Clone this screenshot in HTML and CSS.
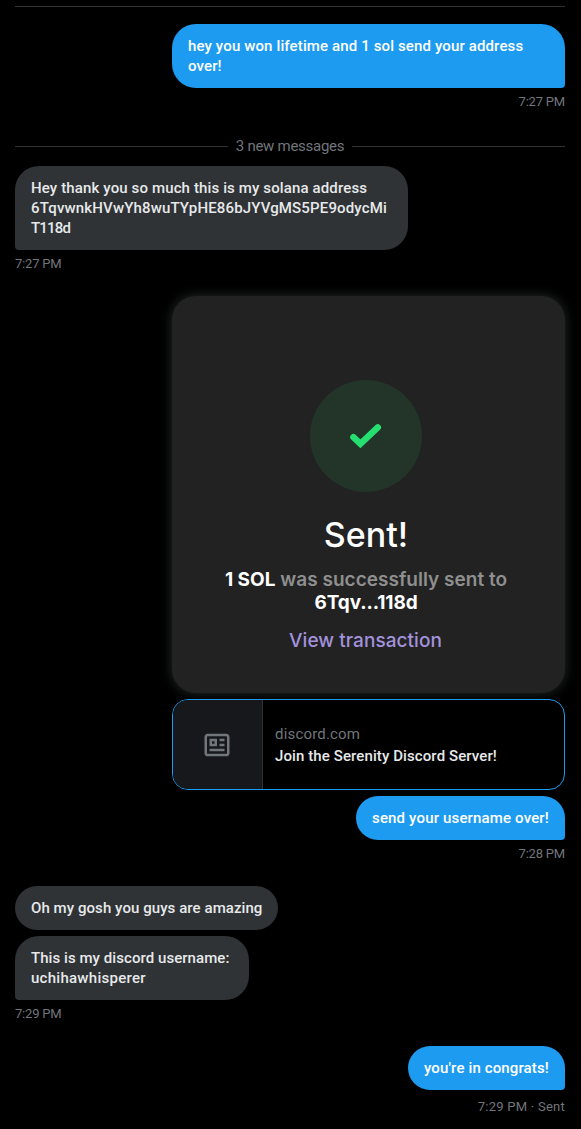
FILE: index.html
```html
<!DOCTYPE html>
<html lang="en">
<head>
    <meta charset="UTF-8">
    <meta name="viewport" content="width=device-width, initial-scale=1.0">
    <title>Messages</title>
    <link rel="stylesheet" href="styles.css">
</head>
<body>
    <div class="chat">
        <hr class="line">

        <div class="group sent">
            <div class="bubble last hey">hey you won lifetime and 1 sol send your address<br>over!</div>
            <div class="time">7:27 PM</div>
        </div>

        <div class="divider"><span>3 new messages</span></div>

        <div class="group received">
            <div class="bubble last address">Hey thank you so much this is my solana address<br><span class="wallet">6TqvwnkHVwYh8wuTYpHE86bJYVgMS5PE9odycMi</span><br><span class="wallet-end">T118d</span></div>
            <div class="time">7:27 PM</div>
        </div>

        <div class="group sent">
            <div class="receipt">
                <div class="circle">
                    <svg width="34" height="26" viewBox="0 0 34 26">
                        <path d="M4.4 14.2 L11.4 20.8 L28.8 4.4" fill="none" stroke="#25df70" stroke-width="6.4" stroke-linecap="round"/>
                    </svg>
                </div>
                <h1>Sent!</h1>
                <p><b>1 SOL</b> was successfully sent to<br><b class="short">6Tqv...118d</b></p>
                <a>View transaction</a>
            </div>
            <div class="card">
                <div class="card-icon">
                    <svg width="30" height="30" viewBox="0 0 24 24" fill="#71767b">
                        <path d="M1.998 5.5c0-1.38 1.119-2.5 2.5-2.5h15c1.381 0 2.5 1.12 2.5 2.5v13c0 1.38-1.119 2.5-2.5 2.5h-15c-1.381 0-2.5-1.12-2.5-2.5v-13zm2.5-.5c-.276 0-.5.22-.5.5v13c0 .28.224.5.5.5h15c.276 0 .5-.22.5-.5v-13c0-.28-.224-.5-.5-.5h-15zM6 7h6v6H6V7zm2 2v2h2V9H8zm10 0h-4V7h4v2zm0 4h-4v-2h4v2zm-.002 4h-12v-2h12v2z"/>
                    </svg>
                </div>
                <div class="card-text">
                    <span class="domain">discord.com</span>
                    <span class="title">Join the Serenity Discord Server!</span>
                </div>
            </div>
            <div class="bubble last username">send your username over!</div>
            <div class="time">7:28 PM</div>
        </div>

        <div class="group received">
            <div class="bubble gosh">Oh my gosh you guys are amazing</div>
            <div class="bubble last discord">This is my discord username:<br><span class="handle">uchihawhisperer</span></div>
            <div class="time">7:29 PM</div>
        </div>

        <div class="group sent">
            <div class="bubble last congrats">you're in congrats!</div>
            <div class="time status">7:29 PM · Sent</div>
        </div>
    </div>
</body>
</html>
```
FILE: styles.css
```css
* {
    box-sizing: border-box;
}
body {
    margin: 0;
    background-color: #000;
    color: #e7e9ea;
    font-family: Roboto, Arial, sans-serif;
    font-size: 15px;
    line-height: 20px;
}
.chat {
    height: 1129px;
    padding: 6px 16px 0 15px;
    overflow: hidden;
}
.line {
    height: 1px;
    margin: 0 0 17px;
    border: none;
    background-color: #2f3336;
}
.group {
    display: flex;
    flex-direction: column;
    align-items: flex-start;
    gap: 6px;
    margin-bottom: 24px;
}
.sent {
    align-items: flex-end;
}
.bubble {
    max-width: 393px;
    padding: 12px 16px;
    border-radius: 22px;
    background-color: #2f3336;
    font-weight: 500;
    letter-spacing: 0.13px;
    white-space: nowrap;
}
.sent .bubble {
    background-color: #1d9bf0;
    color: #fff;
}
.hey, .address {
    width: 393px;
    border-radius: 24px;
}
.username {
    width: 209px;
    letter-spacing: 0.16px;
}
.gosh {
    width: 263px;
    letter-spacing: 0.07px;
}
.discord {
    width: 234px;
    border-radius: 24px;
    letter-spacing: 0.06px;
}
.congrats {
    width: 157px;
}
.sent .last {
    border-bottom-right-radius: 4px;
}
.received .last {
    border-bottom-left-radius: 4px;
}
.wallet {
    letter-spacing: 0.15px;
}
.wallet-end {
    letter-spacing: -0.8px;
}
.handle {
    letter-spacing: 0.27px;
}
.time {
    height: 16px;
    color: #71767b;
    font-size: 13px;
    letter-spacing: -0.2px;
    line-height: 16px;
}
.status {
    margin-top: 3px;
    letter-spacing: 0.25px;
}
.divider {
    display: flex;
    align-items: center;
    gap: 8px;
    margin: 26px 0 10px;
    color: #71767b;
    letter-spacing: -0.27px;
}
.divider::before, .divider::after {
    content: "";
    flex: 1;
    height: 1px;
    background-color: #2f3336;
}
.receipt {
    display: flex;
    flex-direction: column;
    align-items: center;
    width: 393px;
    height: 397px;
    padding-top: 84px;
    border-radius: 24px;
    background-color: #222;
    box-shadow: 0 0 12px rgba(190, 220, 220, 0.2);
    font-family: Inter, sans-serif;
    text-align: center;
}
.circle {
    display: flex;
    align-items: center;
    justify-content: center;
    width: 112px;
    height: 112px;
    margin-right: 6px;
    border-radius: 50%;
    background-color: #233529;
}
.receipt h1 {
    margin: 23px 5px 0 0;
    color: #fff;
    font-size: 34px;
    font-weight: 500;
    line-height: 40px;
}
.receipt p {
    margin: 13px 5px 0 0;
    color: #8f8f8f;
    font-size: 19px;
    font-weight: 600;
    letter-spacing: 0.02px;
    line-height: 23px;
}
.receipt b {
    color: #fff;
    font-weight: 700;
}
.receipt .short {
    letter-spacing: -0.1px;
}
.receipt a {
    margin: 15px 6px 0 0;
    color: #a392dc;
    font-size: 19px;
    font-weight: 500;
    letter-spacing: 0.05px;
    line-height: 24px;
}
.card {
    display: flex;
    width: 393px;
    height: 91px;
    border: 1px solid #1d9bf0;
    border-radius: 16px;
    background-color: #000;
    overflow: hidden;
    z-index: 1;
}
.card-icon {
    display: flex;
    align-items: center;
    justify-content: center;
    width: 90px;
    padding-right: 1px;
    border-right: 1px solid #2f3336;
    background-color: #16181c;
}
.card-text {
    display: flex;
    flex-direction: column;
    justify-content: center;
    gap: 2px;
    padding-left: 12px;
}
.domain {
    color: #71767b;
    letter-spacing: 0.18px;
}
.title {
    font-weight: 500;
    letter-spacing: 0.1px;
}
```
